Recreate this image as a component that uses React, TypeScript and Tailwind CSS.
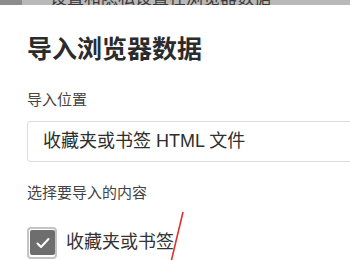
const font = {
  fontFamily: '"Liberation Sans", "Noto Sans CJK SC", sans-serif',
};

function CheckBox() {
  return (
    <div className="relative h-[32px] w-[30px] shrink-0 rounded-[4px] border-2 border-[#c4c4c4] p-[1px]">
      <div className="flex h-[25px] w-[25px] items-center justify-center rounded-[2px] bg-[#6e6e6e]">
        <svg width="16" height="16" viewBox="0 0 16 16" fill="none">
          <path
            d="M2.5 8.5l3.5 3.5 7.5-8"
            stroke="#fff"
            strokeWidth="2"
            strokeLinecap="round"
            strokeLinejoin="round"
          />
        </svg>
      </div>
    </div>
  );
}

export default function App() {
  return (
    <div
      className="relative h-[260px] w-[350px] overflow-hidden bg-white"
      style={font}
    >
      <div className="flex h-[5px] items-end overflow-hidden bg-[#b9b9b9]">
        <div className="h-[5px] w-[22px] bg-[#8c8c8c]" />
        <span className="ml-[28px] whitespace-nowrap text-[17px] leading-[12px] text-[#3a3a3a]">
          设置和隐私设置在浏览器数据
        </span>
      </div>

      <div className="px-[27px]">
        <h1 className="mt-[25px] text-[25px] font-bold leading-[38px] text-[#2b2b2b]">
          导入浏览器数据
        </h1>

        <p className="mt-[22px] text-[15px] leading-[20px] text-[#444]">导入位置</p>

        <div className="mt-[11px] -mr-[40px] flex h-[41px] items-center rounded-[3px] border border-[#dcdcdc] pl-[15px]">
          <span className="text-[18px] text-[#2e2e2e]">收藏夹或书签 HTML 文件</span>
        </div>

        <p className="mt-[21px] text-[15px] leading-[20px] text-[#444]">
          选择要导入的内容
        </p>

        <div className="mt-[24px] flex items-start gap-[9px]">
          <CheckBox />
          <span className="pt-[3px] text-[18px] leading-[24px] text-[#333]">
            收藏夹或书签
          </span>
        </div>
      </div>

      <svg
        className="pointer-events-none absolute left-0 top-0"
        width="350"
        height="260"
      >
        <line x1="183" y1="212" x2="171" y2="262" stroke="#e0302a" strokeWidth="1.6" />
      </svg>
    </div>
  );
}
